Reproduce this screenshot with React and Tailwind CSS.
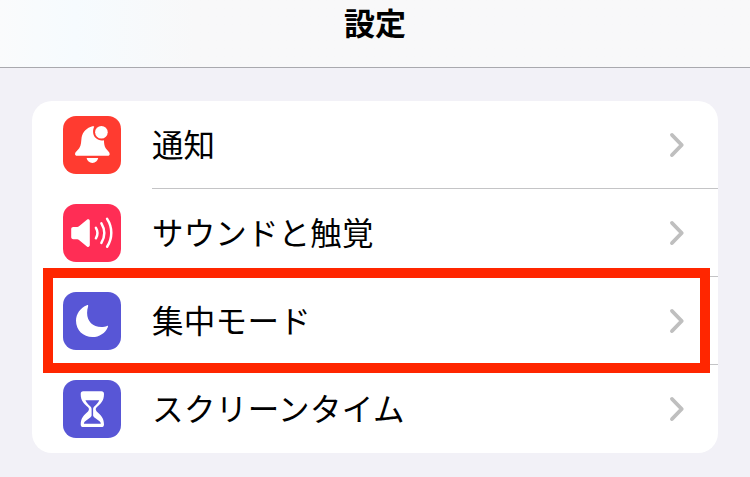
import React from 'react';

const BellIcon = () => (
  <svg viewBox="0 0 58 58" className="w-full h-full" fill="#fff">
    <path d="M29.4 10.3C24 11.6 19.6 16 18.6 21.5C18 25.5 18.4 29 16.2 32.2C14.7 34.3 12 36 12 38C12 39.2 12.8 39.8 14 39.8H44.8C46 39.8 46.7 39.2 46.7 38C46.7 36 44.2 34.3 42.7 32.2C41.3 30 41.1 27.5 40.9 24.3C35.5 25.6 30.3 21.6 30.1 16.3C30 14 30.4 12.4 31.2 10.5C30.6 10.1 30 10.2 29.4 10.3Z" />
    <circle cx="38.4" cy="16.3" r="6.3" />
    <path d="M23.6 42.1H35.2C34.6 45.2 32.4 47 29.4 47S24.2 45.2 23.6 42.1Z" />
  </svg>
);

const SpeakerIcon = () => (
  <svg viewBox="0 0 58 58" className="w-full h-full" fill="none" stroke="#fff" strokeWidth="2.5" strokeLinecap="round">
    <path
      fill="#fff"
      stroke="none"
      d="M10.4 22.9H14.3C15 22.9 15.4 22.7 16 22.2L23.9 15.7C25.2 14.7 26.8 15.4 26.8 17V41.1C26.8 42.8 25.2 43.5 23.9 42.4L16 35.9C15.4 35.4 15 35.2 14.3 35.2H10.4C8.9 35.2 8.2 34.4 8.2 33V25.1C8.2 23.7 8.9 22.9 10.4 22.9Z"
    />
    <path d="M32.9 23.9C34.9 27.2 34.9 31 32.9 34.3" />
    <path d="M38.4 19.3C42.1 25.5 42.1 32.7 38.4 38.9" />
    <path d="M44.1 14.9C49.7 23.4 49.7 34.3 44.1 42.8" />
  </svg>
);

const MoonIcon = () => (
  <svg viewBox="0 0 58 58" className="w-full h-full" fill="#fff">
    <path d="M23.9 13.2C17.5 15.7 13 21.6 13 28.7C13 38 20.2 45 29.5 45C36.2 45 42.4 41 44.9 34.9C45.2 34.1 44.8 33.6 44 33.9C42.4 34.5 40.4 34.9 38.4 34.9C29.8 34.9 24.1 29.3 24.1 20.9C24.1 18.5 24.5 16.4 25.1 14.4C25.4 13.4 24.9 12.8 23.9 13.2Z" />
  </svg>
);

const HourglassIcon = () => (
  <svg viewBox="0 0 58 58" className="w-full h-full">
    <path
      fill="#fff"
      d="M20.2 11.2H38.4C40.1 11.2 41 12.2 41 13.9C41 21.2 37.4 23.8 33.7 27.3C32.4 28.5 32.4 30.2 33.7 31.4C37.4 34.9 41 37.5 41 44.5C41 46.2 40.1 47.1 38.4 47.1H20.2C18.5 47.1 17.7 46.2 17.7 44.5C17.7 37.5 21.3 34.9 25 31.4C26.3 30.2 26.3 28.5 25 27.3C21.3 23.8 17.7 21.2 17.7 13.9C17.7 12.2 18.5 11.2 20.2 11.2Z"
    />
    <path
      fill="#5856d6"
      d="M22.4 20.3H36.3C35.2 23 33.4 24.4 31.5 26.3C30.4 27.4 30.1 28.3 30.1 29.5V35.3C30.1 36.4 30.8 37 31.8 37.7L36.5 41.3C37.3 42 37.7 42.7 37.8 43.8H20.9C21 42.7 21.4 42 22.2 41.3L26.9 37.7C27.9 37 28.6 36.4 28.6 35.3V29.5C28.6 28.3 28.3 27.4 27.2 26.3C25.3 24.4 23.5 23 22.4 20.3Z"
    />
  </svg>
);

const Chevron = () => (
  <svg viewBox="0 0 16 26" className="w-4 h-[26px]" fill="none" stroke="#bfbfbf" strokeWidth="3.9" strokeLinecap="round" strokeLinejoin="round">
    <path d="M3 3L12.7 13L3 23" />
  </svg>
);

const items = [
  { label: '通知', icon: BellIcon, color: 'bg-[#ff3b30]', tracking: '' },
  { label: 'サウンドと触覚', icon: SpeakerIcon, color: 'bg-[#ff2d55]', tracking: 'tracking-[0.15px]' },
  { label: '集中モード', icon: MoonIcon, color: 'bg-[#5856d6]', tracking: 'tracking-[0.3px]', highlighted: true },
  { label: 'スクリーンタイム', icon: HourglassIcon, color: 'bg-[#5856d6]', tracking: 'tracking-[0.4px]' },
];

const SettingsRow = ({ item, last }) => {
  const Icon = item.icon;
  return (
    <li className="relative flex h-[88px] pl-[31px]">
      <div className={`mt-[15px] mr-[31px] w-[58px] h-[58px] shrink-0 rounded-[13px] overflow-hidden ${item.color}`}>
        <Icon />
      </div>
      <div className={`flex flex-1 items-center justify-between pr-[33px] ${last ? '' : 'border-b border-[#c4c4c6]'}`}>
        <span className={`pb-1 text-[31.5px] leading-[44px] whitespace-nowrap ${item.tracking}`}>{item.label}</span>
        <Chevron />
      </div>
      {item.highlighted && (
        <div className="absolute -top-[9px] left-[11px] w-[667px] h-[105px] z-10 border-[10px] border-[#ff2600]" />
      )}
    </li>
  );
};

const App = () => {
  return (
    <div className="h-[477px] overflow-hidden bg-[#f2f1f7] text-black font-['Noto_Sans_CJK_JP','Liberation_Sans',sans-serif]">
      <header className="flex justify-center h-[68px] border-b border-[#a9a9ae] bg-linear-to-r from-[#fafbfc] from-0% via-[#f6fbfe] via-10% to-[#f8f8f9] to-26%">
        <h1 className="text-[31px] leading-[43px] font-bold">設定</h1>
      </header>
      <ul className="mt-[33px] ml-8 w-[686px] rounded-[20px] bg-white">
        {items.map((item, index) => (
          <SettingsRow key={item.label} item={item} last={index === items.length - 1} />
        ))}
      </ul>
    </div>
  );
};

export default App;
